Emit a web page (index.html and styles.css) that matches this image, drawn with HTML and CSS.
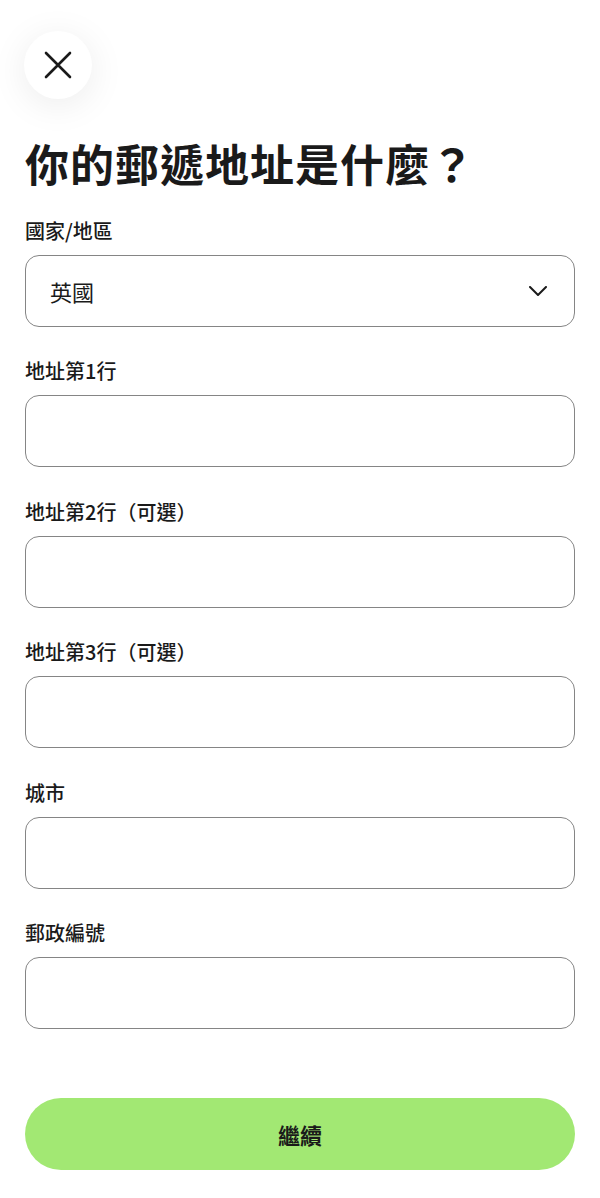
FILE: index.html
```html
<!DOCTYPE html>
<html lang="zh-Hant">
<head>
<meta charset="utf-8">
<link rel="stylesheet" href="styles.css">
</head>
<body>
<div class="page">
  <div class="close">
    <svg width="28" height="28" viewBox="0 0 28 28"><path d="M2 2 L26 26 M26 2 L2 26" stroke="#1a1a1a" stroke-width="2.6" stroke-linecap="round" fill="none"/></svg>
  </div>
  <h1 class="title">你的郵遞地址是什麼？</h1>
  <form class="form">
    <div class="field">
      <label class="label">國家/地區</label>
      <div class="box select">
        <span class="value">英國</span>
        <svg class="chev" width="18" height="10" viewBox="0 0 18 10"><path d="M1 1 L9 9 L17 1" stroke="#1a1a1a" stroke-width="2" fill="none" stroke-linecap="round" stroke-linejoin="round"/></svg>
      </div>
    </div>
    <div class="field">
      <label class="label">地址第1行</label>
      <div class="box"></div>
    </div>
    <div class="field">
      <label class="label">地址第2行（可選）</label>
      <div class="box"></div>
    </div>
    <div class="field">
      <label class="label">地址第3行（可選）</label>
      <div class="box"></div>
    </div>
    <div class="field">
      <label class="label">城市</label>
      <div class="box"></div>
    </div>
    <div class="field">
      <label class="label">郵政編號</label>
      <div class="box"></div>
    </div>
  </form>
  <button class="cta" type="button">繼續</button>
</div>
</body>
</html>
```
FILE: styles.css
```css
html, body {
  margin: 0;
  padding: 0;
  background: #ffffff;
}
body {
  font-family: "Noto Sans CJK TC", "Noto Sans", sans-serif;
  color: #1a1a1a;
}
.page {
  display: flex;
  flex-direction: column;
  padding: 31px 25px 0 25px;
}
.close {
  width: 68px;
  height: 68px;
  margin-left: -1px;
  border-radius: 50%;
  background: #ffffff;
  box-shadow: 0 6px 36px rgba(0, 0, 0, 0.08);
  display: flex;
  align-items: center;
  justify-content: center;
}
.title {
  margin: 34px 0 0 0;
  font-size: 44px;
  line-height: 60px;
  font-weight: 700;
  letter-spacing: 1px;
}
.form {
  display: flex;
  flex-direction: column;
  gap: 30.4px;
  margin-top: 24px;
}
.field {
  display: flex;
  flex-direction: column;
  gap: 10px;
}
.label {
  font-size: 20px;
  line-height: 28px;
  font-weight: 500;
}
.box {
  height: 72px;
  box-sizing: border-box;
  border: 1.5px solid #858585;
  border-radius: 14px;
  display: flex;
  align-items: center;
  padding: 0 25px 0 24px;
}
.select {
  justify-content: space-between;
}
.value {
  font-size: 22px;
  font-weight: 400;
}
.chev {
  margin-right: 2px;
}
.cta {
  margin-top: 69px;
  height: 72px;
  border: none;
  border-radius: 36px;
  background: #a2e873;
  font-family: "Noto Sans CJK TC", sans-serif;
  font-size: 22px;
  font-weight: 700;
  color: #1a1a1a;
}
```
